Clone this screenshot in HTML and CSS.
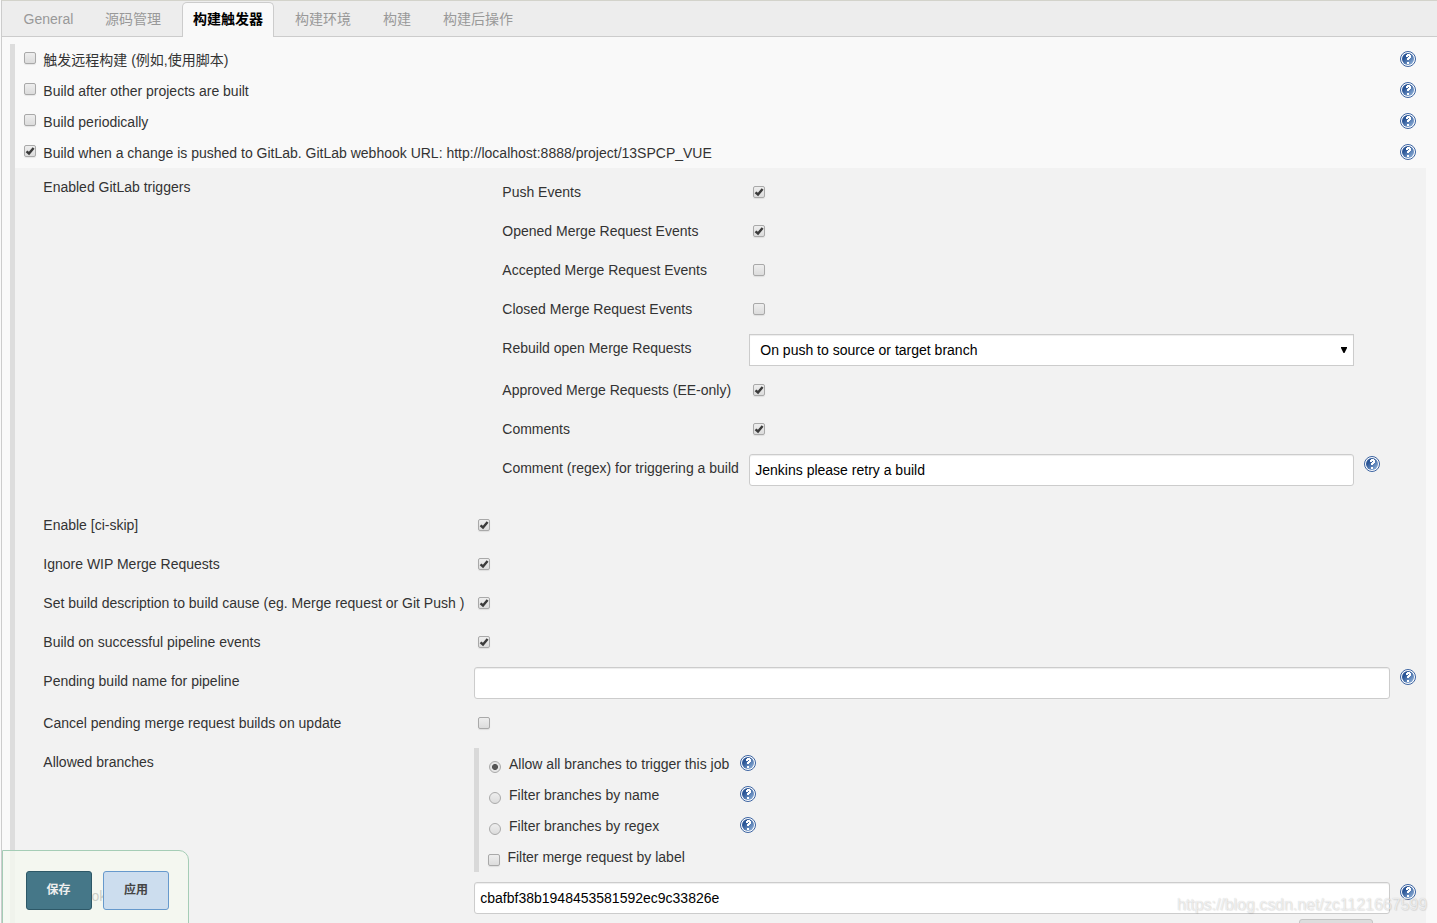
FILE: index.html
```
<!DOCTYPE html>
<html lang="zh">
<head>
<meta charset="utf-8">
<title>构建触发器</title>
<link rel="stylesheet" href="styles.css">
</head>
<body>
<svg class="defs" width="0" height="0" aria-hidden="true">
  <defs>
    <linearGradient id="blue" x1="0" y1="0" x2="1" y2="1"><stop offset=".3" stop-color="#2a5596"/><stop offset="1" stop-color="#9dbde2"/></linearGradient>
    <symbol id="help" viewBox="0 0 16 16">
      <circle cx="8" cy="8" r="7.5" fill="#fff" stroke="#3a62a0" stroke-width="1"/>
      <circle cx="8" cy="8" r="6" fill="url(#blue)"/>
      <path d="M6 6V4h1V3h3v1h1v3h-1v1H9v1H7V7h1V6h1V5H8v1z" fill="#fff"/>
      <path d="M7 11h2v2H7z" fill="#fff"/>
    </symbol>
    <symbol id="tick" viewBox="0 0 12 12"><path d="M2.500 6.300 5 8.500 9.600 2.900" fill="none" stroke="#3b3b3b" stroke-width="2.400"/></symbol>
  </defs>
</svg>
<div class="page">
  <nav class="tabs">
    <a class="tab general">General</a><a class="tab source">源码管理</a><a class="tab active">构建触发器</a><a class="tab env">构建环境</a><a class="tab build">构建</a><a class="tab">构建后操作</a>
  </nav>
  <main class="section">
    <div class="trigger"><span class="check"></span><label>触发远程构建 (例如,使用脚本)</label><svg class="help"><use href="#help"/></svg></div>
    <div class="trigger"><span class="check"></span><label>Build after other projects are built</label><svg class="help"><use href="#help"/></svg></div>
    <div class="trigger"><span class="check"></span><label>Build periodically</label><svg class="help"><use href="#help"/></svg></div>
    <div class="trigger"><span class="check"><svg><use href="#tick"/></svg></span><label>Build when a change is pushed to GitLab. GitLab webhook URL: http://localhost:8888/project/13SPCP_VUE</label><svg class="help"><use href="#help"/></svg></div>

    <div class="options">
      <div class="row group">
        <div class="name">Enabled GitLab triggers</div>
        <div class="events">
          <div class="event"><div>Push Events</div><span class="check"><svg><use href="#tick"/></svg></span></div>
          <div class="event"><div>Opened Merge Request Events</div><span class="check"><svg><use href="#tick"/></svg></span></div>
          <div class="event"><div>Accepted Merge Request Events</div><span class="check"></span></div>
          <div class="event"><div>Closed Merge Request Events</div><span class="check"></span></div>
          <div class="event tall"><div>Rebuild open Merge Requests</div><div class="field select"><span>On push to source or target branch</span><svg class="arrow" viewBox="0 0 6 6"><path d="M0 0h6v1L3.5 6h-1L0 1z"/></svg></div></div>
          <div class="event"><div>Approved Merge Requests (EE-only)</div><span class="check"><svg><use href="#tick"/></svg></span></div>
          <div class="event"><div>Comments</div><span class="check"><svg><use href="#tick"/></svg></span></div>
          <div class="event tall"><div>Comment (regex) for triggering a build</div><div class="field">Jenkins please retry a build</div><svg class="help"><use href="#help"/></svg></div>
        </div>
      </div>
      <div class="row"><div class="name">Enable [ci-skip]</div><span class="check"><svg><use href="#tick"/></svg></span></div>
      <div class="row"><div class="name">Ignore WIP Merge Requests</div><span class="check"><svg><use href="#tick"/></svg></span></div>
      <div class="row"><div class="name">Set build description to build cause (eg. Merge request or Git Push )</div><span class="check"><svg><use href="#tick"/></svg></span></div>
      <div class="row"><div class="name">Build on successful pipeline events</div><span class="check"><svg><use href="#tick"/></svg></span></div>
      <div class="row tall"><div class="name">Pending build name for pipeline</div><div class="field"></div><svg class="help"><use href="#help"/></svg></div>
      <div class="row"><div class="name">Cancel pending merge request builds on update</div><span class="check"></span></div>
      <div class="row branches">
        <div class="name">Allowed branches</div>
        <div class="choices">
          <div class="choice"><span class="radio on"></span><label>Allow all branches to trigger this job</label><svg class="help"><use href="#help"/></svg></div>
          <div class="choice"><span class="radio"></span><label>Filter branches by name</label><svg class="help"><use href="#help"/></svg></div>
          <div class="choice"><span class="radio"></span><label>Filter branches by regex</label><svg class="help"><use href="#help"/></svg></div>
          <div class="choice last"><span class="check"></span><label>Filter merge request by label</label></div>
        </div>
      </div>
      <div class="row tall"><div class="name">Secret token</div><div class="field">cbafbf38b1948453581592ec9c33826e</div><svg class="help"><use href="#help"/></svg></div>
      <div class="generate"></div>
    </div>
  </main>
  <div class="savebar"><button class="btn save">保存</button><button class="btn apply">应用</button></div>
  <div class="watermark">https://blog.csdn.net/zc1121667599</div>
</div>
</body>
</html>
```
FILE: styles.css
```
* { box-sizing: border-box; }
body { margin: 0; background: #f9f9f9; color: #333; font: 14px/28px "Liberation Sans", "Noto Sans CJK SC", sans-serif; overflow: hidden; }
.defs { position: absolute; }
.page { position: relative; height: 923px; overflow: hidden; margin-left: 1px; border-left: 1px solid #ccc; border-top: 1px solid #d3d3cb; }
.tabs { display: flex; height: 36px; padding-left: 12px; background: #ededed; border-bottom: 1px solid #ccc; }
.tab { height: 35px; padding: 0 10px; line-height: 36px; color: #999; white-space: nowrap; }
.tab.general { width: 81px; padding-left: 9.5px; }
.tab.source { width: 87px; }
.tab.env { margin-left: 11px; width: 88px; }
.tab.build { width: 60px; }
.tab.active { width: 92px; margin-top: 1px; line-height: 33px; color: #000; font-weight: bold; background: #f9f9f9; border: 1px solid #ccc; border-bottom: 0; border-radius: 5px 5px 0 0; }
.section { margin: 7px 11px 0 8px; border-left: 5px solid #ddd; }
.help { display: block; width: 16px; height: 16px; flex: none; }
label, .name, .event > div { white-space: nowrap; }
.check { display: block; flex: none; width: 12px; height: 12px; border: 1px solid #a9a9a9; border-radius: 2px; background: linear-gradient(#eee, #dcdcdc); box-shadow: 0 1px 1px rgba(0,0,0,.08); }
.check svg { display: block; width: 12px; height: 12px; margin: -1px; }
.trigger { display: flex; height: 31px; padding: 8px 0 0 9px; }
.trigger label { margin: -6px auto 0 7.3px; }
.trigger .help { margin: -1px 10px 0 0; }
.options { background: #f2f2f2; height: 760px; }
.row { display: grid; grid-template-columns: 431px 916px 16px; height: 39px; padding: 5px 0 0 28px; }
.name { padding-left: .3px; }
.row.tall { height: 42px; }
.row > .check { margin: 8px 0 0 4px; }
.row > .help { margin: 2px 0 0 10px; }
.row.group { height: 338px; }
.events { padding-left: 28px; }
.event { display: grid; grid-template-columns: 247px 605px 16px; height: 39px; padding-top: 5px; }
.event > div:first-child { padding-left: .3px; }
.event.tall { height: 42px; }
.event .check { margin: 8px 0 0 4px; }
.event .help { margin: 2px 0 0 10px; }
.field { height: 32px; padding: 0 5.3px; line-height: 30px; color: #000; background: #fff; border: 1px solid #ccc; border-radius: 3px; box-shadow: inset 0 1px 1px rgba(0,0,0,.075); }
.field.select { display: flex; justify-content: space-between; padding: 0 6px 0 10.3px; border-radius: 0; }
.arrow { width: 6px; height: 6px; margin-top: 12px; }
.row.branches { height: 134px; }
.choices { height: 124px; border-left: 5px solid #d9d9d9; }
.choice { display: grid; grid-template-columns: 20px 231px 16px; height: 31px; padding: 2px 0 0 10px; }
.choice .help { margin-top: 5px; }
.radio { width: 12px; height: 12px; margin-top: 11px; border: 1px solid #aaa; border-radius: 50%; background: linear-gradient(#eee, #dcdcdc); }
.radio.on { background: radial-gradient(circle, #555 0 2.6px, #e6e6e6 3.4px); }
.choice.last { grid-template-columns: 19.4px 231px; padding-left: 9px; }
.choice .check { margin-top: 11px; }
.generate { width: 74px; height: 30px; margin-left: 1284px; border: 1px solid #c4c4c4; border-radius: 3px; background: #ddd; }
.savebar { position: absolute; left: 0; top: 849px; display: flex; gap: 11px; width: 187px; height: 80px; padding: 20px 0 0 23px; border: 1px solid #a5cdb6; border-radius: 0 10px 0 0; background: rgba(245,249,240,.78); }
.btn { width: 66px; height: 39px; padding: 0; border-radius: 3px; font: bold 12px/35px "Liberation Sans", "Noto Sans CJK SC", sans-serif; }
.save { padding-right: 1px; color: #eee; background: #457788; border: 1px solid #2d5867; }
.apply { color: #444; background: #ccddee; border: 1px solid #6699cc; }
.watermark { position: absolute; left: 1175px; top: 890px; font-size: 16px; letter-spacing: -.04px; color: rgba(255,255,255,.65); text-shadow: 0 0 1px rgba(0,0,0,.2), 1px 1px 1px rgba(0,0,0,.08); white-space: nowrap; }
```
